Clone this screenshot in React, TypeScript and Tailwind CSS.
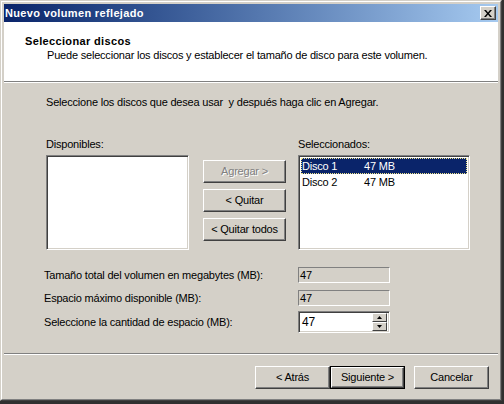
import React from 'react';

const font = { fontFamily: '"Liberation Sans", Arial, sans-serif' };

const Btn: React.FC<{ label: string; w?: string; disabled?: boolean; primary?: boolean }> = ({ label, w = 'w-[83px]', disabled, primary }) => {
  const raised =
    'h-full w-full flex items-center justify-center bg-[#d4d0c8] border border-t-white border-l-white border-b-[#404040] border-r-[#404040] shadow-[inset_-1px_-1px_0_#808080,inset_1px_1px_0_#d4d0c8]';
  return (
    <div className={`${w} h-[23px] ${primary ? 'border border-black' : ''}`}>
      <div className={raised}>
        <span
          className={`text-[11px] leading-[13px] ${disabled ? 'text-[#808080] [text-shadow:1px_1px_0_#ffffff]' : 'text-black'}`}
        >
          {label}
        </span>
      </div>
    </div>
  );
};

const Sunken: React.FC<{ className?: string; children?: React.ReactNode }> = ({ className = '', children }) => (
  <div
    className={`border border-t-[#808080] border-l-[#808080] border-b-white border-r-white shadow-[inset_1px_1px_0_#404040,inset_-1px_-1px_0_#d4d0c8] ${className}`}
  >
    {children}
  </div>
);

const ReadField: React.FC<{ value: string }> = ({ value }) => (
  <div className="w-[92px] h-[16px] border border-t-[#808080] border-l-[#808080] border-b-white border-r-white bg-[#d4d0c8] flex items-center pl-[1px] text-[11px] leading-[13px]">
    {value}
  </div>
);

const SpinBtn: React.FC<{ up?: boolean }> = ({ up }) => (
  <div className="h-[9px] w-[15px] flex items-center justify-center bg-[#d4d0c8] border border-t-white border-l-white border-b-[#404040] border-r-[#404040]">
    <svg width="5" height="3" viewBox="0 0 5 3">
      {up ? <polygon points="2.5,0 5,3 0,3" fill="#000" /> : <polygon points="0,0 5,0 2.5,3" fill="#000" />}
    </svg>
  </div>
);

export default function App() {
  return (
    <div className="w-[504px] h-[404px] bg-[#303030] overflow-hidden tracking-[-0.2px]" style={font}>
      <div className="w-[502px] h-[401px] bg-[#d4d0c8] border border-t-[#d4d0c8] border-l-[#d4d0c8] border-b-[#404040] border-r-[#404040]">
        <div className="h-full border border-t-white border-l-white border-b-[#808080] border-r-[#808080] p-[2px] flex flex-col">
          {/* title bar */}
          <div className="h-[18px] bg-gradient-to-r from-[#0a246a] to-[#a6caf0] flex items-center justify-between pl-[1px] pr-[2px]">
            <span className="text-white font-bold text-[11px] leading-[13px] tracking-[0.35px]">Nuevo volumen reflejado</span>
            <div className="w-[16px] h-[14px] bg-[#d4d0c8] border border-t-white border-l-white border-b-[#404040] border-r-[#404040] shadow-[inset_-1px_-1px_0_#808080] flex items-center justify-center">
              <svg width="8" height="7" viewBox="0 0 8 7">
                <path d="M0 0h2l2 2.5L6 0h2L5 3.5 8 7H6L4 4.5 2 7H0l3-3.5z" fill="#000" />
              </svg>
            </div>
          </div>

          {/* header */}
          <div className="h-[60px] bg-white border-b border-b-[#808080] shadow-[0_1px_0_#ffffff] mb-[1px] pl-[21px] pt-[13px]">
            <div className="font-bold text-[11px] leading-[13px] text-black tracking-[0.35px]">Seleccionar discos</div>
            <div className="pl-[22px] mt-[1px] text-[11px] leading-[13px] text-black">
              Puede seleccionar los discos y establecer el tamaño de disco para este volumen.
            </div>
          </div>

          {/* body */}
          <div className="flex-1 flex flex-col pl-[42px] text-[11px] leading-[13px] text-black">
            <div className="mt-[13px]">Seleccione los discos que desea usar &nbsp;y después haga clic en Agregar.</div>

            <div className="mt-[29px] flex">
              <div className="w-[143px] flex flex-col">
                <div>Disponibles:</div>
                <Sunken className="mt-[4px] h-[95px] bg-white" />
              </div>
              <div className="ml-[14px] mt-[22px] flex flex-col gap-[6px]">
                <Btn label="Agregar >" disabled />
                <Btn label="< Quitar" />
                <Btn label="< Quitar todos" />
              </div>
              <div className="ml-[12px] w-[172px] flex flex-col">
                <div>Seleccionados:</div>
                <Sunken className="mt-[4px] h-[95px] bg-white p-[2px]">
                  <div className="h-[16px] bg-[#0a246a] text-white flex items-center border border-dotted border-[#f0e68c]">
                    <span className="w-[62px]">Disco 1</span>
                    <span>47 MB</span>
                  </div>
                  <div className="h-[16px] flex items-center border border-transparent">
                    <span className="w-[62px]">Disco 2</span>
                    <span>47 MB</span>
                  </div>
                </Sunken>
              </div>
            </div>

            <div className="-ml-[2px] mt-[17px] flex items-center">
              <span className="w-[254px]">Tamaño total del volumen en megabytes (MB):</span>
              <ReadField value="47" />
            </div>
            <div className="-ml-[2px] mt-[7px] flex items-center">
              <span className="w-[254px]">Espacio máximo disponible (MB):</span>
              <ReadField value="47" />
            </div>
            <div className="-ml-[2px] mt-[5px] flex items-center">
              <span className="w-[254px]">Seleccione la cantidad de espacio (MB):</span>
              <Sunken className="w-[92px] h-[22px] bg-white flex items-center justify-between pl-[3px] pr-[2px]">
                <span className="text-[12px]">47</span>
                <div className="flex flex-col">
                  <SpinBtn up />
                  <SpinBtn />
                </div>
              </Sunken>
            </div>
          </div>

          {/* separator */}
          <div className="h-[2px] border-t border-t-[#808080] border-b border-b-white" />

          {/* footer */}
          <div className="h-[42px] flex items-start pt-[11px] pl-[251px] text-[11px]">
            <Btn label="< Atrás" w="w-[75px]" />
            <Btn label="Siguiente >" w="w-[75px]" primary />
            <div className="ml-[9px]">
              <Btn label="Cancelar" w="w-[75px]" />
            </div>
          </div>
        </div>
      </div>
    </div>
  );
}
